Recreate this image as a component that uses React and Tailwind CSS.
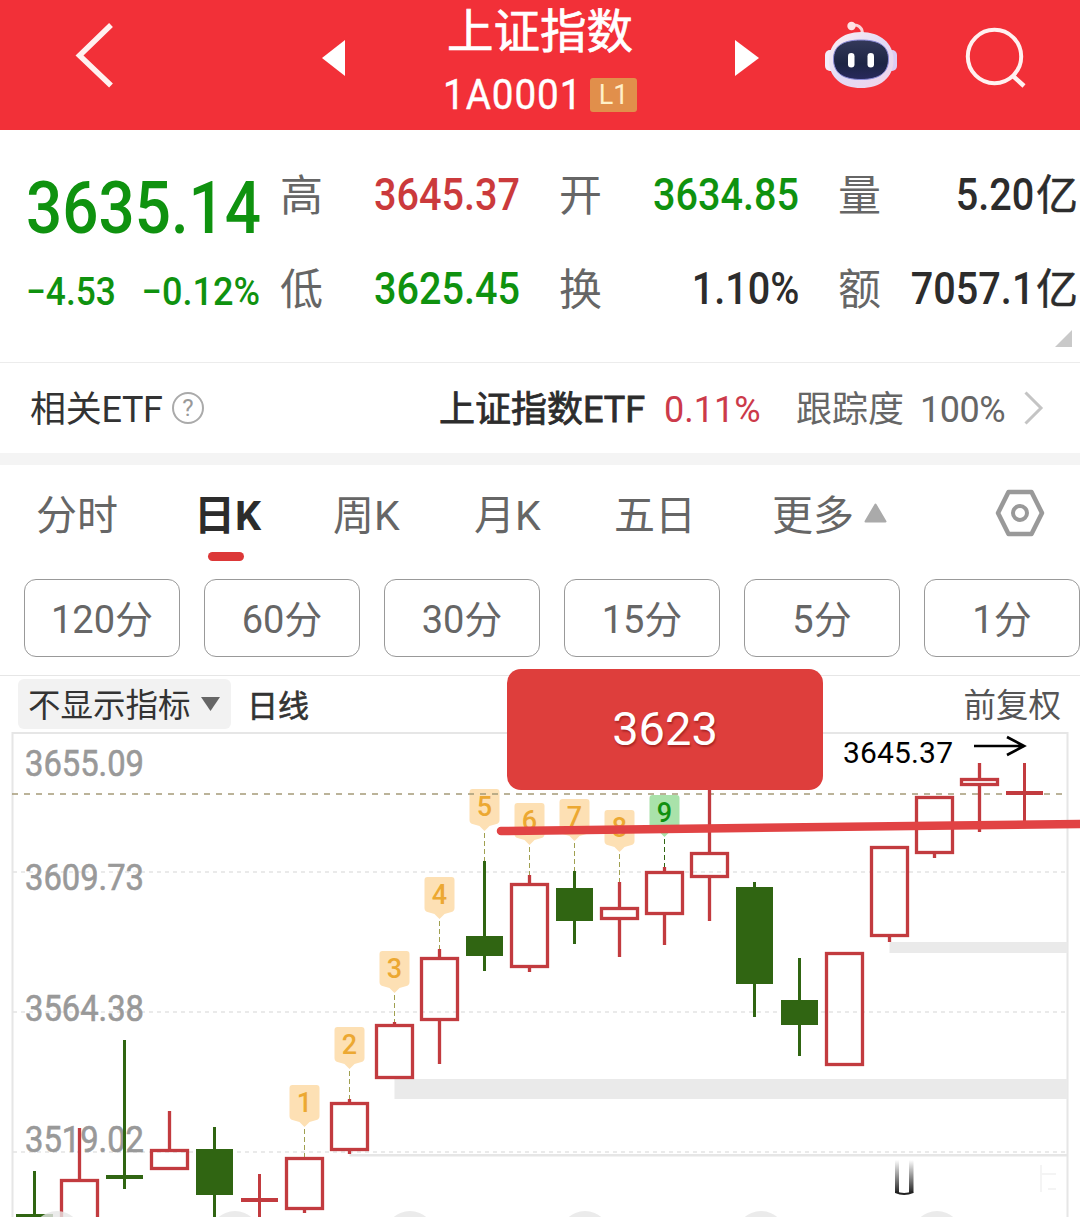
import React, { useState } from "react";

const tabs = [
  { name: "分时", width: "w-[158px]" },
  { name: "日K", width: "w-[139px]" },
  { name: "周K", width: "w-[141px]" },
  { name: "月K", width: "w-[140px]" },
  { name: "五日", width: "w-[158px]" },
];

const periods = ["120分", "60分", "30分", "15分", "5分", "1分"];

const quotes = [
  { label: "高", value: "3645.37", color: "text-[#cb3a3c]" },
  { label: "开", value: "3634.85", color: "text-[#0f920f]" },
  { label: "量", value: "5.20", unit: "亿", color: "text-[#2c2c2c]" },
  { label: "低", value: "3625.45", color: "text-[#0f920f]" },
  { label: "换", value: "1.10%", color: "text-[#2c2c2c]" },
  { label: "额", value: "7057.1", unit: "亿", color: "text-[#2c2c2c]" },
];

// x = center, high/low = wick ends, top/bottom = body
const candles = [
  { x: 34.5, high: 1171, top: 1214, bottom: 1230, low: 1230, down: true },
  { x: 79.5, high: 1128, top: 1179, bottom: 1230, low: 1230 },
  { x: 124.5, high: 1040, top: 1175, bottom: 1179, low: 1189, down: true },
  { x: 169.5, high: 1111, top: 1149, bottom: 1170, low: 1170 },
  { x: 214.5, high: 1127, top: 1149, bottom: 1195, low: 1230, down: true },
  { x: 259.5, high: 1174, top: 1198, bottom: 1202, low: 1230 },
  { x: 304.5, high: 1157, top: 1157, bottom: 1210, low: 1213 },
  { x: 349.5, high: 1099, top: 1102, bottom: 1151, low: 1154 },
  { x: 394.5, high: 1022, top: 1024, bottom: 1079, low: 1079 },
  { x: 439.5, high: 949, top: 957, bottom: 1021, low: 1064 },
  { x: 484.5, high: 861, top: 936, bottom: 956, low: 971, down: true },
  { x: 529.5, high: 875, top: 883, bottom: 968, low: 972 },
  { x: 574.5, high: 871, top: 888, bottom: 921, low: 944, down: true },
  { x: 619.5, high: 882, top: 907, bottom: 920, low: 957 },
  { x: 664.5, high: 867, top: 871, bottom: 915, low: 945 },
  { x: 709.5, high: 780, top: 852, bottom: 878, low: 921 },
  { x: 754.5, high: 882, top: 887, bottom: 984, low: 1017, down: true },
  { x: 799.5, high: 958, top: 1000, bottom: 1025, low: 1056, down: true },
  { x: 844.5, high: 952, top: 952, bottom: 1066, low: 1066 },
  { x: 889.5, high: 846, top: 846, bottom: 937, low: 942 },
  { x: 934.5, high: 796, top: 796, bottom: 854, low: 858 },
  { x: 979.5, high: 763, top: 778, bottom: 786, low: 832 },
  { x: 1024.5, high: 763, top: 791, bottom: 795, low: 822 },
];

const flags = [
  { n: 1, x: 304.5, y: 1085, end: 1157 },
  { n: 2, x: 349.5, y: 1027, end: 1099 },
  { n: 3, x: 394.5, y: 951, end: 1022 },
  { n: 4, x: 439.5, y: 877, end: 949 },
  { n: 5, x: 484.5, y: 789, end: 861 },
  { n: 6, x: 529.5, y: 803, end: 875 },
  { n: 7, x: 574.5, y: 799, end: 871 },
  { n: 8, x: 619.5, y: 810, end: 882 },
  { n: 9, x: 664.5, y: 795, end: 867 },
];

const priceLabels = [
  { text: "3655.09", y: 775.5 },
  { text: "3609.73", y: 889.5 },
  { text: "3564.38", y: 1020.5 },
  { text: "3519.02", y: 1151.5 },
];

const Robot = () => (
  <svg width="74" height="70" viewBox="824 20 74 70">
    <defs>
      <linearGradient id="shell" x1="0" y1="0" x2="1" y2="1">
        <stop offset="0" stopColor="#fff1f2" />
        <stop offset="0.5" stopColor="#e2dbf6" />
        <stop offset="1" stopColor="#f3d3e8" />
      </linearGradient>
      <linearGradient id="visor" x1="0" y1="0" x2="0" y2="1">
        <stop offset="0" stopColor="#34395a" />
        <stop offset="0.6" stopColor="#1d2544" />
        <stop offset="1" stopColor="#28295c" />
      </linearGradient>
    </defs>
    <path d="M851 25.500C858 24 862 27 862.500 33" fill="none" stroke="#fbd3d8" strokeWidth="3" />
    <circle cx="851.500" cy="26" r="4.200" fill="#ffe2e4" />
    <rect x="825" y="50" width="12" height="21" rx="5" fill="#f3edfb" />
    <rect x="885" y="50" width="12" height="21" rx="5" fill="#dccbf4" />
    <path
      d="M861 32C880 32 893.500 43 893.500 60C893.500 78 880 88 861 88C842 88 829 78 829 60C829 43 842 32 861 32Z"
      fill="url(#shell)"
    />
    <path
      d="M861 40C879 40 888.500 46 888.500 59C888.500 73 879 79.500 861 79.500C843 79.500 833.500 73 833.500 59C833.500 46 843 40 861 40Z"
      fill="url(#visor)"
      stroke="#8a8ad8"
      strokeWidth="1"
    />
    <rect x="848" y="53" width="6.500" height="14.500" rx="3.250" fill="#fff" />
    <rect x="867.500" y="53" width="6.500" height="14.500" rx="3.250" fill="#fff" />
  </svg>
);

const Header = () => (
  <header className="flex h-[130px] bg-[#f23038] text-white">
    <div className="flex w-[322px] items-start pt-[22px] pl-[75px]">
      <svg width="40" height="68" viewBox="75 22 40 68">
        <path d="M111 25L79.500 55.500L111 85.500" fill="none" stroke="#fff1f0" strokeWidth="5.500" />
      </svg>
    </div>
    <svg className="mt-10" width="23" height="36" viewBox="0 0 23 36">
      <path d="M23 0V36L0 18Z" fill="#fff" />
    </svg>
    <div className="flex w-[390px] flex-col items-center">
      <h1 className="mt-[5px] h-[54px] text-[46.5px] leading-[54px] [-webkit-text-stroke:0.7px_#fff]">上证指数</h1>
      <div className="mt-[13px] flex h-[46px] w-[194px] items-center justify-between">
        <span className="w-[134px] origin-left scale-x-[.92] text-[42px] leading-none tracking-[1px] whitespace-nowrap [-webkit-text-stroke:0.4px_#fff]">
          1A0001
        </span>
        <span className="flex h-[34px] w-[47px] items-center justify-center rounded-[3px] bg-[#e18f4b] text-[27px] leading-none text-[#fff0c8]">
          L1
        </span>
      </div>
    </div>
    <svg className="mt-10" width="24" height="36" viewBox="0 0 24 36">
      <path d="M0 0V36L24 18Z" fill="#fff" />
    </svg>
    <div className="mt-5 ml-[65px]">
      <Robot />
    </div>
    <svg className="mt-6 ml-[65px]" width="66" height="66" viewBox="963 24 66 66">
      <circle cx="994.500" cy="56.500" r="26.700" fill="none" stroke="#fff1f0" strokeWidth="4" />
      <path d="M1013 76L1024 86" stroke="#fff1f0" strokeWidth="4.500" />
    </svg>
  </header>
);

const Quote = () => (
  <section className="relative flex h-[233px] border-b border-[#ececec] pt-[17px] pl-[26px]">
    <div className="w-[254px] text-[#0f920f]">
      <div className="mt-6 h-[74px] w-[234px] origin-left scale-x-[.873] text-[73px] leading-[74px] font-medium whitespace-nowrap">
        3635.14
      </div>
      <div className="mt-[27px] flex w-[234px] justify-between text-[39px] leading-[40px] font-medium">
        <span className="w-[90px] origin-left scale-x-[.905] whitespace-nowrap">−4.53</span>
        <span className="flex w-[118px] justify-end">
          <span className="origin-right scale-x-[.925] whitespace-nowrap">−0.12%</span>
        </span>
      </div>
    </div>
    <div className="grid grid-cols-[240px_240px_240px] grid-rows-[94px_94px] gap-x-[39px]">
      {quotes.map((q) => (
        <div key={q.label} className="flex items-center justify-between leading-none">
          <span className="pt-1 text-[43px] text-[#666]">{q.label}</span>
          <span className={`flex w-[190px] items-center justify-end text-[45px] font-medium ${q.color}`}>
            <span className="origin-right scale-x-[.88] whitespace-nowrap">{q.value}</span>
            {q.unit && (
              <span className="ml-[2px] pt-1 text-[42px] font-normal [-webkit-text-stroke:0.5px_#2c2c2c]">
                {q.unit}
              </span>
            )}
          </span>
        </div>
      ))}
    </div>
    <svg className="absolute top-[200px] left-[1055px]" width="17" height="17" viewBox="0 0 17 17">
      <path d="M17 0V17H0Z" fill="#c9c9c9" />
    </svg>
  </section>
);

const EtfRow = () => (
  <section className="flex h-[102px] items-center border-b-12 border-[#f4f4f4] pl-[30px] text-[36px] leading-none whitespace-nowrap">
    <span className="w-[142px] pt-1 tracking-[-0.3px] text-[#333]">相关ETF</span>
    <span className="flex h-8 w-8 items-center justify-center rounded-full border-2 border-[#aaa] text-[24px] text-[#999]">
      ?
    </span>
    <span className="ml-[235px] w-[225px] pt-1 text-[#2c2c2c] [-webkit-text-stroke:0.8px_#2c2c2c]">
      上证指数ETF
    </span>
    <span className="w-[132px] pt-[3px] text-[#cc3a4a]">0.11%</span>
    <span className="w-[124px] pt-1 text-[#666]">跟踪度</span>
    <span className="w-[104px] pt-[3px] tracking-[-0.5px] text-[#666]">100%</span>
    <svg width="20" height="34" viewBox="0 0 20 34">
      <path d="M1.500 1.500L17 17L1.500 32.500" fill="none" stroke="#c4c4c4" strokeWidth="3" />
    </svg>
  </section>
);

const Candle = ({ x, high, top, bottom, low, down }) => {
  const color = down ? "#306512" : "#c23b3f";
  if (down || bottom - top < 5) {
    return (
      <g fill={color}>
        <rect x={x - 1.5} y={high} width="3" height={low - high} />
        <rect x={x - 18.5} y={top} width="37" height={bottom - top} />
      </g>
    );
  }
  return (
    <g stroke={color} strokeWidth="3.300" fill="none">
      <path d={`M${x} ${high}V${top}M${x} ${bottom}V${low}`} />
      <rect x={x - 18} y={top + 1.5} width="36" height={bottom - top - 3} />
    </g>
  );
};

const Flag = ({ n, x, y, end }) => {
  const last = n === 9;
  return (
    <g>
      <path
        d={`M${x - 12} ${y}h24q3 0 3 3v28q0 3 -3 4l-7 2l-5 5l-5 -5l-7 -2q-3 -1 -3 -4v-28q0 -3 3 -3Z`}
        fill={last ? "#a9e2aa" : "#fde0b4"}
      />
      <path d={`M${x} ${y + 44}V${end}`} stroke={last ? "#306512" : "#a0a050"} strokeDasharray="5 3" />
      <text
        x={x}
        y={y + 27}
        textAnchor="middle"
        fontSize="27"
        fontWeight="500"
        fill={last ? "#109010" : "#eca832"}
      >
        {n}
      </text>
    </g>
  );
};

const Chart = () => (
  <svg className="block" width="1080" height="485" viewBox="0 732 1080 485">
    <defs>
      <linearGradient id="fade" x1="0" y1="0" x2="0" y2="1">
        <stop offset="0" stopColor="#222" stopOpacity="0" />
        <stop offset="1" stopColor="#222" />
      </linearGradient>
    </defs>
    {/* Frame and grid */}
    <path d="M12.500 1217V733H1067.500V1217" fill="none" stroke="#e6e6e6" strokeWidth="2" />
    <path d="M13 872H1067M13 1012H1067M13 1152H1067" stroke="#e3e3e3" strokeWidth="1.500" strokeDasharray="4 4" />
    {/* Price gaps */}
    <rect x="889.500" y="942" width="178" height="11" fill="#eaeaea" />
    <rect x="394.500" y="1079" width="673" height="20" fill="#eaeaea" />
    <rect x="349.500" y="1154" width="718" height="2.500" fill="#e6e6e6" />
    {priceLabels.map((p) => (
      <text
        key={p.text}
        x="25"
        y={p.y}
        fontSize="36"
        fill="#999"
        stroke="#999"
        strokeWidth="0.600"
        textLength="119"
        lengthAdjust="spacingAndGlyphs"
      >
        {p.text}
      </text>
    ))}
    {flags.map((f) => (
      <Flag key={f.n} {...f} />
    ))}
    <path d="M12 794H1067" stroke="#a59b78" strokeWidth="1.700" strokeDasharray="6 6" />
    {candles.map((c) => (
      <Candle key={c.x} {...c} />
    ))}
    {[57, 235, 410, 585, 761, 937].map((cx) => (
      <circle key={cx} cx={cx} cy="1236" r="25" fill="#e6e6e6" fillOpacity="0.8" />
    ))}
    <path d="M501 831L1084 824" stroke="#e14344" strokeWidth="8.500" strokeLinecap="round" />
    {/* High price marker */}
    <text x="843" y="763" fontSize="30" fill="#000" textLength="110">
      3645.37
    </text>
    <path d="M974 746H1024M1007 737L1024 746L1007 755" fill="none" stroke="#000" strokeWidth="2.700" />
    <rect x="895" y="1160" width="4" height="33" fill="url(#fade)" />
    <rect x="909" y="1160" width="4.500" height="33" fill="url(#fade)" />
    <path d="M895.500 1192Q904 1196 913 1192" fill="none" stroke="#222" strokeWidth="2" />
    <path d="M1040 1174H1056M1041 1165V1192M1048 1189H1056" stroke="#f4f4f4" strokeWidth="2" />
  </svg>
);

const App = () => {
  const [tab, setTab] = useState("日K");

  return (
    <div className="h-[1217px] w-[1080px] overflow-hidden bg-white font-['Roboto','Noto_Sans_CJK_SC',sans-serif]">
      <Header />
      <Quote />
      <EtfRow />

      {/* Period tabs */}
      <nav className="flex h-[114px] pl-9 text-[41px] leading-none text-[#666]">
        {tabs.map((t) => (
          <button
            key={t.name}
            onClick={() => setTab(t.name)}
            className={`flex flex-col items-start pt-[31px] ${t.width} ${
              tab === t.name ? "font-bold text-[#2c2c2c]" : ""
            }`}
          >
            {t.name}
            {tab === t.name && <span className="mt-[15px] ml-[14px] h-[9px] w-9 rounded-full bg-[#dc3838]" />}
          </button>
        ))}
        <button className="flex w-[223px] items-start pt-[31px]">
          更多
          <svg className="mt-[7px] ml-[10px]" width="23" height="20" viewBox="0 0 23 20">
            <path d="M11.500 1.500L21.500 18.500H1.500Z" fill="#aaa" stroke="#aaa" strokeWidth="2" strokeLinejoin="round" />
          </svg>
        </button>
        <svg className="mt-6" width="50" height="48" viewBox="995 489 50 48">
          <path
            d="M1008.500 492H1031.500L1042 513L1031.500 534H1008.500L998 513Z"
            fill="none"
            stroke="#999"
            strokeWidth="4.500"
            strokeLinejoin="round"
          />
          <circle cx="1020" cy="513" r="7" fill="none" stroke="#999" strokeWidth="4" />
        </svg>
      </nav>

      <div className="flex h-[97px] gap-6 border-b border-[#e6e6e6] pl-6">
        {periods.map((p) => (
          <button
            key={p}
            className="h-[78px] w-[156px] shrink-0 rounded-xl border border-[#999] pt-1 text-[38px] leading-none text-[#666]"
          >
            {p}
          </button>
        ))}
      </div>

      {/* Chart */}
      <section className="relative">
        <div className="flex h-14 items-start justify-between pt-[3px] pr-[19px] pl-[18px] text-[32.5px] leading-none">
          <div className="flex items-center">
            <button className="flex h-[50px] w-[213px] items-center rounded-md bg-[#f2f2f2] pl-[10px] text-[#333]">
              <span className="pt-1">不显示指标</span>
              <svg className="ml-[10px]" width="19" height="14" viewBox="0 0 19 14">
                <path d="M0 0H19L9.500 14Z" fill="#666" />
              </svg>
            </button>
            <span className="ml-4 pt-1 text-[31px] text-[#333] [-webkit-text-stroke:0.6px_#333]">日线</span>
          </div>
          <span className="flex h-[50px] items-center pt-1 text-[#555]">前复权</span>
        </div>
        <Chart />
        <div className="absolute -top-[7px] left-[507px] flex h-[121px] w-[316px] items-center justify-center rounded-[14px] bg-[#de3e3c] pb-[3px] text-[47px] leading-none text-white [text-shadow:1px_2px_2px_rgba(90,0,0,0.4)]">
          3623
        </div>
      </section>
    </div>
  );
};

export default App;
